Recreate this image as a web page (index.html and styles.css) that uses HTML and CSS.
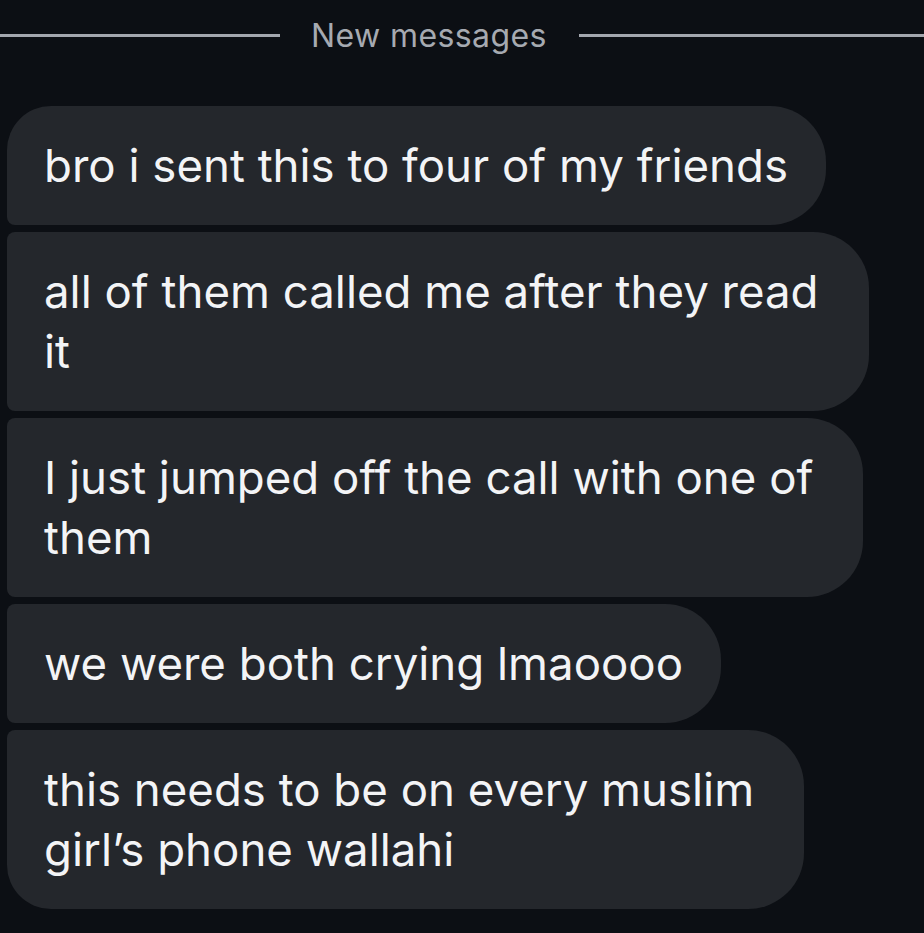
FILE: index.html
```html
<!DOCTYPE html>
<html>
<head>
<meta charset="utf-8">
<link rel="stylesheet" href="styles.css">
</head>
<body>
<div class="chat">
  <div class="divider">
    <span class="line line-left"></span>
    <span class="divider-label">New messages</span>
    <span class="line line-right"></span>
  </div>
  <div class="messages">
    <div class="bubble first">bro i sent this to four of my friends</div>
    <div class="bubble multi">all of them called me after they read<br>it</div>
    <div class="bubble multi">I just jumped off the call with one of<br>them</div>
    <div class="bubble">we were both crying lmaoooo</div>
    <div class="bubble multi last">this needs to be on every muslim<br>girl’s phone wallahi</div>
  </div>
</div>
</body>
</html>
```

FILE: styles.css
```css
html, body {
  margin: 0;
  padding: 0;
  background: #0c0f14;
}
body {
  width: 924px;
  height: 933px;
  overflow: hidden;
  font-family: "Inter", "Roboto", sans-serif;
}
.chat {
  display: flex;
  flex-direction: column;
}
.divider {
  display: flex;
  align-items: center;
  height: 70px;
}
.line {
  height: 3px;
  background: #a3a7ae;
}
.line-left {
  width: 280px;
}
.line-right {
  flex: 1;
}
.divider-label {
  color: #a6aab1;
  font-size: 32px;
  padding: 0 32px 0 31px;
  letter-spacing: 0.4px;
}
.messages {
  display: flex;
  flex-direction: column;
  align-items: flex-start;
  gap: 7px;
  padding: 36px 0 0 7px;
}
.bubble {
  background: #24272c;
  color: #f3f4f6;
  font-size: 45.6px;
  line-height: 60px;
  padding: 30px 38px 29px 37px;
  border-radius: 8px 56px 56px 8px;
  white-space: nowrap;
}
.bubble.multi {
  padding-right: 50px;
}
.bubble.first {
  border-top-left-radius: 44px;
}
.bubble.last {
  border-bottom-left-radius: 44px;
}
```
